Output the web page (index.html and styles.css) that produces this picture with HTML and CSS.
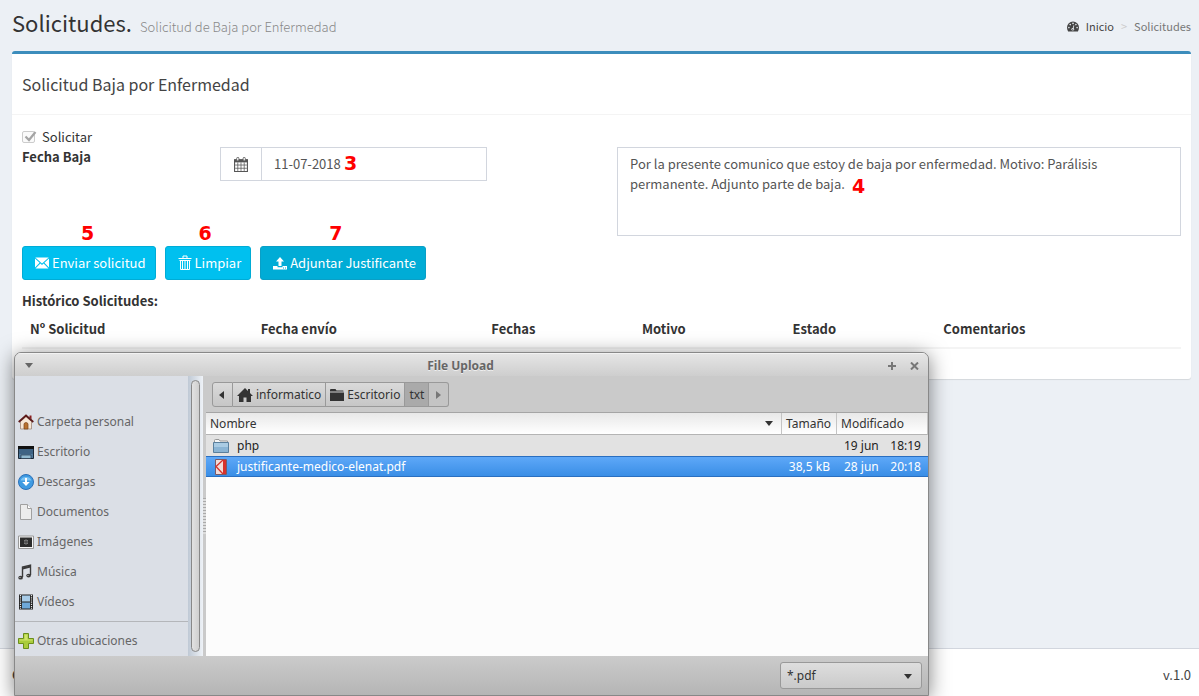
FILE: index.html
```html
<!DOCTYPE html>
<html lang="es">
<head>
<meta charset="utf-8">
<title>Solicitudes</title>
<link rel="stylesheet" href="styles.css">
</head>
<body>
<header class="page-header">
  <h1>Solicitudes.</h1>
  <small class="subtitle">Solicitud de Baja por Enfermedad</small>
  <nav class="breadcrumb">
    <a href="#inicio">
      <svg class="gauge" viewBox="0 0 12 11" aria-hidden="true"><path d="M6 .5a6 6 0 0 0-6 6c0 1.500.4 2.700 1.100 4h9.800c.7-1.300 1.100-2.500 1.100-4a6 6 0 0 0-6-6z" fill="#444"/><g fill="#ecf0f5"><circle cx="1.900" cy="6.600" r=".8"/><circle cx="3.200" cy="3.600" r=".8"/><circle cx="6" cy="2.400" r=".8"/><circle cx="8.900" cy="3.600" r=".8"/><circle cx="10.100" cy="6.600" r=".8"/><circle cx="5.800" cy="8.200" r="1.300"/><path d="M5.500 7.800 6.600 4.200l.7.200-.9 3.700z"/></g><circle cx="5.800" cy="8.300" r=".6" fill="#444"/></svg>
      Inicio</a>
    <span class="sep">&gt;</span>
    <span class="current">Solicitudes</span>
  </nav>
</header>

<main class="content">
  <section class="box">
    <h2 class="box-title">Solicitud Baja por Enfermedad</h2>
    <div class="box-body">
      <label class="check">
        <input type="checkbox" checked disabled>
        <svg class="tick" viewBox="0 0 14 14" aria-hidden="true"><path d="M2.500 6.500 6 10 12.500 2" fill="none" stroke="#a4a4a4" stroke-width="2.200"/></svg>
        Solicitar
      </label>
      <div class="form-row">
        <label class="bold" for="fecha">Fecha Baja</label>
        <div class="input-group">
          <span class="addon">
            <svg viewBox="0 0 13 14" width="14" height="15" aria-hidden="true"><path d="M.5 3h12v10.500H.5z" fill="#fff" stroke="#555"/><path d="M0 2h13v3H0z" fill="#555"/><path d="M3.500 5v8M6.500 5v8M9.500 5v8M1 7.500h11M1 10.500h11" stroke="#555" stroke-width=".7"/><rect x="2.500" y=".3" width="2" height="3.400" rx="1" fill="#fff" stroke="#555" stroke-width=".8"/><rect x="8.500" y=".3" width="2" height="3.400" rx="1" fill="#fff" stroke="#555" stroke-width=".8"/></svg>
          </span>
          <input id="fecha" type="text" value="11-07-2018">
          <span class="mark mark-3">3</span>
        </div>
        <div class="message">
          <textarea aria-label="Motivo">Por la presente comunico que estoy de baja por enfermedad. Motivo: Parálisis permanente. Adjunto parte de baja.</textarea>
          <span class="mark mark-4">4</span>
        </div>
      </div>
      <div class="actions">
        <button type="button" class="btn">
          <svg viewBox="0 0 14 12" width="14" height="12" aria-hidden="true"><path d="M.3.500h13.400L7 6.600zM0 1.500 4.600 5.700 0 10.500zM14 1.500 9.400 5.700 14 10.500zM.5 11.500 5.400 6.500 7 7.900l1.600-1.400 4.900 5z" fill="#fff"/></svg>
          Enviar solicitud<span class="mark mark-5">5</span></button>
        <button type="button" class="btn">
          <svg viewBox="0 0 14 16" width="14" height="16" aria-hidden="true"><path d="M.5 3.500h13M5 3V1h4v2M1.500 5.500h11M2.500 5v9.500h9V5M4.500 6v8M7 6v8M9.500 6v8" fill="none" stroke="#fff"/></svg>
          Limpiar<span class="mark mark-6">6</span></button>
        <button type="button" class="btn btn-active">
          <svg viewBox="0 0 14 13" width="14" height="13" aria-hidden="true"><path d="M7 0l4 4.500H8.500V9h-3V4.500H3zM0 9h4.500v1.200h5V9H14v3.500H0z" fill="#fff"/><path d="M10 11h1M12 11h1" stroke="#00acd6"/></svg>
          Adjuntar Justificante<span class="mark mark-7">7</span></button>
      </div>
      <p class="bold history-title">Histórico Solicitudes:</p>
      <table class="history">
        <thead><tr><th>Nº Solicitud</th><th>Fecha envío</th><th>Fechas</th><th>Motivo</th><th>Estado</th><th>Comentarios</th></tr></thead>
      </table>
    </div>
  </section>
</main>

<footer class="page-footer"><strong>C</strong><span>v.1.0</span></footer>

<div class="dialog" role="dialog" aria-label="File Upload">
  <div class="titlebar">
    <button type="button" class="wbtn" aria-label="Menú"><svg viewBox="0 0 8 5" width="8" height="5"><path d="M0 0h8L4 5z" fill="#666"/></svg></button>
    <strong class="title">File Upload</strong>
    <button type="button" class="wbtn" aria-label="Maximizar"><svg viewBox="0 0 8 8" width="8" height="8"><path d="M4 0v8M0 4h8" stroke="#777" stroke-width="2"/></svg></button>
    <button type="button" class="wbtn" aria-label="Cerrar"><svg viewBox="0 0 9 8" width="9" height="8"><path d="M1 0.500 8 7.500M8 .5 1 7.500" stroke="#777" stroke-width="2"/></svg></button>
  </div>
  <div class="dialog-main">
    <ul class="places">
      <li><a href="#personal"><svg viewBox="0 0 16 16"><path d="M2.500 7.500 8 2.500l5.500 5V15h-11z" fill="#f6e6d6" stroke="#a08878" stroke-width=".8"/><path d="M11.500 1.500h2v4l-2-2z" fill="#8b2020"/><path d="M.7 8 8 1.500 15.300 8" fill="none" stroke="#5c1a1a" stroke-width="1.800"/><path d="M6 15v-4.500a2 2 0 0 1 4 0V15z" fill="#b8702e" stroke="#7a4418" stroke-width=".7"/></svg>Carpeta personal</a></li>
      <li><a href="#escritorio"><svg viewBox="0 0 16 16"><path d="M.5 2.500h15v12H.5z" fill="#507a9c" stroke="#1c2a38"/><path d="M0 2h16v3H0z" fill="#111"/><path d="M1 5h14v5H1z" fill="#3e6384"/><path d="M3 11h10v3.500H3z" fill="#8fb8cf" stroke="#26384a" stroke-width=".7"/></svg>Escritorio</a></li>
      <li><a href="#descargas"><svg viewBox="0 0 16 16"><circle cx="8" cy="8" r="7.500" fill="#3f9be2" stroke="#2a70b8"/><path d="M2.500 6.500a5.800 5 0 0 1 11 0z" fill="#7cc4f4"/><path d="M7 4h2v4h2.800L8 12 4.200 8H7z" fill="#fff"/></svg>Descargas</a></li>
      <li><a href="#documentos"><svg viewBox="0 0 16 16"><path d="M2.500.500h7l4 4v11h-11z" fill="#ececec" stroke="#a0a0a0"/><path d="M9.500.500v4h4" fill="#fff" stroke="#a0a0a0"/></svg>Documentos</a></li>
      <li><a href="#imagenes"><svg viewBox="0 0 16 16"><path d="M.5 2h15v12.500H.5z" fill="#f4f4f4" stroke="#999"/><path d="M2 3.500h12V13H2z" fill="#2c2c2c"/><path d="M8 5.500v5M6 6.500l4 3M10 6.500l-4 3" stroke="#aaa"/><circle cx="8" cy="8" r="1" fill="#333"/></svg>Imágenes</a></li>
      <li><a href="#musica"><svg viewBox="0 0 16 16"><path d="M4.500 13V3L12.500 1.200V11" fill="none" stroke="#3a3a3a" stroke-width="1.400"/><path d="M4.500 4.500 12.500 2.500" stroke="#3a3a3a" stroke-width="2"/><ellipse cx="2.600" cy="13.700" rx="2.300" ry="1.900" fill="#3a3a3a"/><ellipse cx="10.600" cy="11.600" rx="2.300" ry="1.900" fill="#3a3a3a"/><path d="M1.500 13.500h1M9.500 11.500h1" stroke="#ccc"/></svg>Música</a></li>
      <li><a href="#videos"><svg viewBox="0 0 16 16"><path d="M1 .5h14v15H1z" fill="#222"/><path d="M4 1.500h8v6H4z" fill="#a8cce8"/><path d="M4 8.500h8v6H4z" fill="#6ea8d8"/><path d="M2.500 1v14M13.500 1v14" stroke="#e8e8e8" stroke-width="1.200" stroke-dasharray="1.200 1"/></svg>Vídeos</a></li>
      <li class="others"><a href="#otras"><svg viewBox="0 0 16 16"><path d="M5.500.500h5v5h5v5h-5v5h-5v-5h-5v-5h5z" fill="#a9cc3c" stroke="#6b8e1c"/><path d="M6.500 1.500h3v5h5v1h-13v-1h5z" fill="#cfe46a"/></svg>Otras ubicaciones</a></li>
    </ul>
    <div class="scroll"><div class="thumb"></div></div>
    <div class="grip"><i class="dots"></i></div>
    <div class="files">
      <div class="pathbar">
        <button type="button" aria-label="Atrás"><svg viewBox="0 0 5 8" width="5" height="8"><path d="M5 0v8L0 4z" fill="#333"/></svg></button>
        <button type="button"><svg viewBox="0 0 16 14" width="16" height="14"><path d="M8 0l3 3V1h2v4l3 3h-2v6H9.500V9.500h-3V14H2V8H0z" fill="#333"/></svg>informatico</button>
        <button type="button"><svg viewBox="0 0 14 12" width="14" height="12"><path d="M0 2.500V1q0-1 1-1h4.500l1 1.500H13q.6 0 .6 1zM0 3.500h14V12H0z" fill="#333"/></svg>Escritorio</button>
        <button type="button" class="on">txt</button>
        <button type="button" class="next" aria-label="Adelante"><svg viewBox="0 0 5 8" width="5" height="8"><path d="M0 0v8l5-4z" fill="#777"/></svg></button>
      </div>
      <table class="list">
        <colgroup><col><col class="c-size"><col class="c-date"></colgroup>
        <thead><tr>
          <th><span class="sort">Nombre<svg viewBox="0 0 8 5" width="8" height="5"><path d="M0 0h8L4 5z" fill="#333"/></svg></span></th>
          <th>Tamaño</th><th>Modificado</th></tr></thead>
        <tbody>
          <tr class="odd"><td><span class="file"><svg viewBox="0 0 16 14" width="16" height="14"><path d="M1.500 4V1.500q0-1 1-1H6L7 2h7.500v3" fill="#f6f6f6" stroke="#999"/><path d="M.5 3.500h15v10H.5z" fill="#8ab4d4" stroke="#5a7f9c"/><path d="M1 4h14v4H1z" fill="#a9cbe3"/></svg>php</span></td><td></td><td><span class="date"><span>19 jun</span><span>18:19</span></span></td></tr>
          <tr class="sel"><td><span class="file"><svg viewBox="0 0 16 16" width="16" height="16"><path d="M2.500.500h11v15h-11z" fill="#f2dcd8" stroke="#7c5a66"/><path d="M10 1h3v14h-3z" fill="#d8322c"/><path d="M10 1 3 7.500 10 15" fill="none" stroke="#d8322c" stroke-width="1.300"/></svg>justificante-medico-elenat.pdf</span></td><td class="size">38,5 kB</td><td><span class="date"><span>28 jun</span><span>20:18</span></span></td></tr>
        </tbody>
      </table>
    </div>
  </div>
  <div class="dialog-foot">
    <div class="filter">
      <select aria-label="Tipo de archivo"><option>*.pdf</option></select>
      <svg class="arrow" viewBox="0 0 8 5" width="8" height="5" aria-hidden="true"><path d="M0 0h8L4 5z" fill="#333"/></svg>
    </div>
  </div>
</div>
</body>
</html>
```
FILE: styles.css
```css
* { box-sizing: border-box; }
body {
  margin: 0;
  min-height: 100vh;
  display: flex;
  flex-direction: column;
  position: relative;
  overflow: hidden;
  background: #ecf0f5;
  color: #333;
  font: 13px/20px "Noto Sans CJK SC", "Noto Sans", sans-serif;
}
a { color: inherit; text-decoration: none; }
button, input, textarea, select { font: inherit; color: inherit; margin: 0; }
.bold { font-weight: 700; }

.page-header { display: flex; align-items: baseline; padding: 8px 8px 0 12px; }
.page-header h1 { margin: 0; font-size: 22px; line-height: 28px; font-weight: 400; }
.subtitle { margin-left: 8px; font-size: 13px; font-weight: 300; color: #888; }
.breadcrumb { margin-left: auto; align-self: center; display: flex; padding-top: 6px; font-size: 11px; color: #444; }
.breadcrumb .sep { padding: 0 7px; color: #ccc; }
.breadcrumb .current { color: #777; }
.gauge { width: 12px; height: 11px; margin-right: 4px; vertical-align: -1px; }

.content { flex: 1; padding: 14px 8px 0 12px; }
.box { background: #fff; border-top: 3px solid #3c8dbc; border-radius: 3px; box-shadow: 0 1px 1px rgba(0, 0, 0, .1); }
.box-title { margin: 0; padding: 20px 10px; font-size: 16px; font-weight: 400; line-height: 20px; color: #444; border-bottom: 1px solid #f4f4f4; }
.box-body { padding: 12px 10px 10px; }

.check { position: relative; display: flex; align-items: center; gap: 7px; width: max-content; }
.check input { appearance: none; width: 13px; height: 12px; border: 1px solid #ccc; border-radius: 2px; background: #fafafa; }
.tick { position: absolute; left: 1px; top: 3px; width: 14px; height: 14px; }

.form-row { display: grid; grid-template-columns: 198fr 267fr 130fr 564fr; align-items: start; }
.input-group { position: relative; display: flex; height: 34px; border: 1px solid #d2d6de; background: #fff; color: #555; }
.addon { width: 41px; display: grid; place-items: center; border-right: 1px solid #d2d6de; }
.input-group input { flex: 1; min-width: 0; border: 0; padding: 0 12px; background: none; }
.message { position: relative; grid-column: 4; }
.message textarea { display: block; width: 100%; height: 89px; resize: none; border: 1px solid #d2d6de; padding: 6px 28px 6px 12px; color: #555; background: #fff; overflow: hidden; }

.mark { position: absolute; font: 700 19px/20px "DejaVu Sans", sans-serif; color: #f00; }
.mark-3 { left: 123px; top: 5px; }
.mark-4 { left: 235px; top: 29px; }
.mark-5 { left: 58px; top: -24px; }
.mark-6 { left: 33px; top: -24px; }
.mark-7 { left: 68px; top: -24px; }

.actions { display: flex; gap: 9px; margin: 10px 0 11px; }
.btn { position: relative; display: flex; align-items: center; gap: 3px; height: 34px; padding: 0 9px 0 12px; border: 1px solid #00acd6; border-radius: 3px; background: #00c0ef; color: #fff; }
.btn-active { background: #00acd6; border-color: #0a9fc6; }
.history-title { margin: 0; }
.history { width: 100%; margin-bottom: 20px; border-collapse: separate; border-spacing: 0; table-layout: fixed; }
.history th { padding: 8px; text-align: left; border-bottom: 2px solid #f4f4f4; width: 13%; }
.history th:nth-child(-n+2) { width: 19.9%; }
.history th:last-child { width: auto; }

.page-footer { display: flex; justify-content: space-between; padding: 16px 8px 11px 12px; background: #fff; border-top: 1px solid #d2d6de; color: #444; }

.dialog {
  position: absolute;
  left: 14px;
  right: 270px;
  top: 352px;
  border: 1px solid #888;
  border-radius: 7px 7px 0 0;
  background: #cacaca;
  box-shadow: 0 3px 20px rgba(0, 0, 0, .5);
  overflow: hidden;
  color: #333;
  font: 12px/20px "Noto Sans", "Open Sans", sans-serif;
}
.titlebar { display: flex; align-items: center; height: 23px; padding: 2px 3px 0; background: linear-gradient(#e6e6e6, #cecece); box-shadow: inset 0 1px #f2f2f2; }
.title { flex: 1; text-align: center; color: #666; text-shadow: 0 1px #eee; }
.wbtn { width: 22px; height: 20px; padding: 0; border: 0; background: none; display: grid; place-items: center; }

.dialog-main { display: flex; background: #cacaca; }
.places { width: 173px; margin: 0; padding: 31px 0 0; list-style: none; background: #dbdfe6; color: #666; }
.places a { display: flex; align-items: center; gap: 3px; height: 30px; padding-left: 3px; }
.places svg { width: 16px; height: 16px; }
.places .others { margin-top: 4px; padding-top: 4px; border-top: 1px solid #b4b6ba; }
.scroll { width: 15px; padding: 4px 3px; background: linear-gradient(90deg, #bfc9d5, #eef2f7); }
.thumb { height: 100%; border: 1px solid #888; border-radius: 5px; background: linear-gradient(90deg, #e2e2e2, #cfcfcf); }
.grip { width: 3px; display: grid; align-items: center; background: #cacaca; }
.dots { height: 36px; background: repeating-linear-gradient(#aaa 0 1px, #ddd 1px 3px); }
.files { flex: 1; min-width: 0; background: #fcfcfc; }
.pathbar { display: flex; padding: 6px 6px 5px; background: #cacaca; border-bottom: 1px solid #a5a5a5; }
.pathbar button { display: flex; align-items: center; gap: 3px; height: 25px; padding: 0 4px; border: 1px solid #999; border-left-width: 0; background: linear-gradient(#dadada, #c6c6c6); }
.pathbar button:first-child { padding: 0 8px 0 6px; border-left-width: 1px; border-radius: 3px 0 0 3px; }
.pathbar button:last-child { padding: 0 7px; border-radius: 0 3px 3px 0; }
.pathbar .on { background: #aaa; }
.pathbar .next { background: #c4c4c4; }
.list { width: 100%; border-collapse: separate; border-spacing: 0; table-layout: fixed; }
.c-size { width: 55px; }
.c-date { width: 91px; }
.list th, .list td { padding: 0 4px; text-align: left; font-weight: 400; white-space: nowrap; }
.list th { height: 22px; background: linear-gradient(#e8e8e8, #fff); border-bottom: 1px solid #b4b4b4; border-right: 1px solid #c4c4c4; }
.list td { height: 21px; line-height: 19px; }
.list .size { text-align: right; padding-right: 7px; }
.odd td { background: #e2e2e2; color: #222; }
.sel td { color: #fff; background: linear-gradient(#5ea8f8, #3a8ee6); border-top: 1px solid #2a6fc0; border-bottom: 1px solid #2a6fc0; }
.sort { display: flex; justify-content: space-between; align-items: center; padding-right: 4px; }
.file { display: flex; align-items: center; gap: 8px; padding-left: 3px; }
.date { display: flex; justify-content: space-between; padding: 0 3px; }

.dialog-foot { display: flex; justify-content: flex-end; padding: 6px; background: linear-gradient(#cbcbcb, #b5b5b5); }
.filter { position: relative; width: 142px; }
.filter select { appearance: none; display: block; width: 100%; height: 27px; padding: 0 6px; border: 1px solid #999; border-radius: 3px; background: linear-gradient(#dedede, #cacaca); }
.arrow { position: absolute; right: 10px; top: 12px; pointer-events: none; }
```
